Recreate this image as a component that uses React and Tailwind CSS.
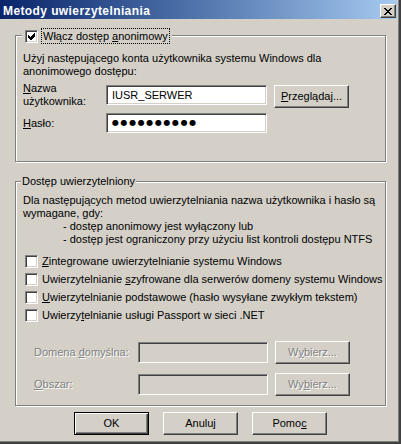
import React from "react";

// Windows classic bevels
const sunken =
  "border border-t-[#808080] border-l-[#808080] border-b-white border-r-white shadow-[inset_1px_1px_0_#404040,inset_-1px_-1px_0_#d4d0c8]";
const raised =
  "border border-t-white border-l-white border-b-[#404040] border-r-[#404040] shadow-[inset_-1px_-1px_0_#808080]";
const etched =
  "border border-[#808080] shadow-[1px_1px_0_#fff,inset_1px_1px_0_#fff]";
const disabledText = "text-[#808080] [text-shadow:1px_1px_0_#fff]";

function CheckMark() {
  return (
    <svg width="7" height="7" viewBox="0 0 7 7" shapeRendering="crispEdges">
      <polygon points="0,2 2,4 6,0 7,0 7,3 3,7 2,7 0,5" fill="#000" />
    </svg>
  );
}

function Checkbox({ checked }) {
  return (
    <div className={`w-[13px] h-[13px] shrink-0 bg-white flex items-center justify-center ${sunken}`}>
      {checked && <CheckMark />}
    </div>
  );
}

function Button({ children, className = "", disabled, isDefault }) {
  const frame = isDefault
    ? "border border-black shadow-[inset_1px_1px_0_#fff,inset_-1px_-1px_0_#404040,inset_-2px_-2px_0_#808080]"
    : raised;
  return (
    <div
      className={`w-[75px] h-[23px] shrink-0 flex items-center justify-center bg-[#d4d0c8] leading-[13px] ${frame} ${
        disabled ? disabledText : "text-black"
      } ${className}`}
    >
      {children}
    </div>
  );
}

function CheckRow({ children }) {
  return (
    <div className="h-[18px] flex items-center pl-[9px] gap-[4px]">
      <Checkbox />
      <span className="leading-[13px]">{children}</span>
    </div>
  );
}

export default function App() {
  return (
    <div className="w-[401px] h-[444px] border-r-2 border-b-2 border-[#404040] text-[11px] text-black [font-family:'Liberation_Sans',Arial,sans-serif]">
      <div className="h-full flex flex-col bg-[#d4d0c8] border-r border-b border-[#808080]">
        {/* title bar */}
        <div className="h-[19px] mr-[1px] flex items-start bg-linear-to-r from-[#0a246a] to-[#a6caf0]">
          <span className="pl-[3px] pt-[4px] text-[12px] tracking-[0.4px] leading-[14px] font-bold text-white">
            Metody uwierzytelniania
          </span>
          <div className={`ml-auto mr-[1px] mt-[4px] w-[16px] h-[14px] flex items-center justify-center bg-[#d4d0c8] ${raised}`}>
            <svg width="8" height="7" viewBox="0 0 8 7" shapeRendering="crispEdges">
              <path d="M0 0h2v1h1v1h2v-1h1v-1h2v1h-1v1h-1v1h-1v1h1v1h1v1h1v1h-2v-1h-1v-1h-2v1h-1v1h-2v-1h1v-1h1v-1h1v-1h-1v-1h-1v-1h-1z" fill="#000" />
            </svg>
          </div>
        </div>

        {/* anonymous access */}
        <div className={`mt-[16px] ml-[15px] w-[371px] h-[127px] ${etched}`}>
          <div className="-mt-[8px] ml-[6px] w-fit flex items-center gap-[3px] bg-[#d4d0c8] pl-[3px] pr-[2px]">
            <Checkbox checked />
            <span className="border border-dotted border-black px-[1px] leading-[14px]">
              Włącz dostęp <u>a</u>nonimowy
            </span>
          </div>
          <p className="mt-[8px] pl-[7px] leading-[13px]">
            Użyj następującego konta użytkownika systemu Windows dla
            <br />
            anonimowego dostępu:
          </p>
          <div className="mt-[4px] pl-[7px] flex">
            <div className="w-[83px] leading-[13px]">
              <u>N</u>azwa
              <br />
              użytkownika:
            </div>
            <div className={`mt-[3px] w-[161px] h-[20px] flex items-center pl-[5px] bg-white ${sunken}`}>
              IUSR_SERWER
            </div>
            <Button className="ml-[7px] mt-[3px]">
              <span>
                <u>P</u>rzeglądaj...
              </span>
            </Button>
          </div>
          <div className="mt-[5px] pl-[7px] h-[20px] flex items-center">
            <div className="w-[83px] leading-[13px]">
              <u>H</u>asło:
            </div>
            <div className={`w-[161px] h-[20px] flex items-center pl-[5px] bg-white ${sunken}`}>
              <span className="[font-family:'DejaVu_Sans',sans-serif] text-[8px] tracking-[1.6px] leading-none">
                ●●●●●●●●●●
              </span>
            </div>
          </div>
        </div>

        {/* authenticated access */}
        <div className={`mt-[19px] ml-[15px] w-[371px] h-[225px] ${etched}`}>
          <div className="-mt-[7px] ml-[5px] w-fit bg-[#d4d0c8] px-[1px] leading-[13px]">
            Dostęp uwierzytelniony
          </div>
          <div className="mt-[6px] pl-[7px] leading-[13px]">
            <p>Dla następujących metod uwierzytelniania nazwa użytkownika i hasło są</p>
            <p>wymagane, gdy:</p>
            <p className="pl-[40px]">- dostęp anonimowy jest wyłączony lub</p>
            <p className="pl-[40px]">- dostęp jest ograniczony przy użyciu list kontroli dostępu NTFS</p>
          </div>
          <div className="mt-[6px] flex flex-col">
            <CheckRow>
              <u>Z</u>integrowane uwierzytelnianie systemu Windows
            </CheckRow>
            <CheckRow>
              Uwierzytelnianie <u>s</u>zyfrowane dla serwerów domeny systemu Windows
            </CheckRow>
            <CheckRow>
              <u>U</u>wierzytelnianie podstawowe (hasło wysyłane zwykłym tekstem)
            </CheckRow>
            <CheckRow>
              Uwierzy<u>t</u>elnianie usługi Passport w sieci .NET
            </CheckRow>
          </div>
          <div className="mt-[17px] pl-[18px] h-[23px] flex items-center">
            <div className={`w-[104px] leading-[13px] ${disabledText}`}>
              Domena <u>d</u>omyślna:
            </div>
            <div className={`w-[130px] h-[21px] ${sunken}`} />
            <Button disabled className="ml-[7px]">
              <span>
                W<u>y</u>bierz...
              </span>
            </Button>
          </div>
          <div className="mt-[9px] pl-[18px] h-[23px] flex items-center">
            <div className={`w-[104px] leading-[13px] ${disabledText}`}>
              <u>O</u>bszar:
            </div>
            <div className={`w-[130px] h-[21px] ${sunken}`} />
            <Button disabled className="ml-[7px]">
              <span>
                Wy<u>b</u>ierz...
              </span>
            </Button>
          </div>
        </div>

        {/* dialog buttons */}
        <div className="mt-[6px] pl-[74px] flex gap-[14px]">
          <Button isDefault>OK</Button>
          <Button>Anuluj</Button>
          <Button>
            <span>
              Pomo<u>c</u>
            </span>
          </Button>
        </div>
      </div>
    </div>
  );
}
